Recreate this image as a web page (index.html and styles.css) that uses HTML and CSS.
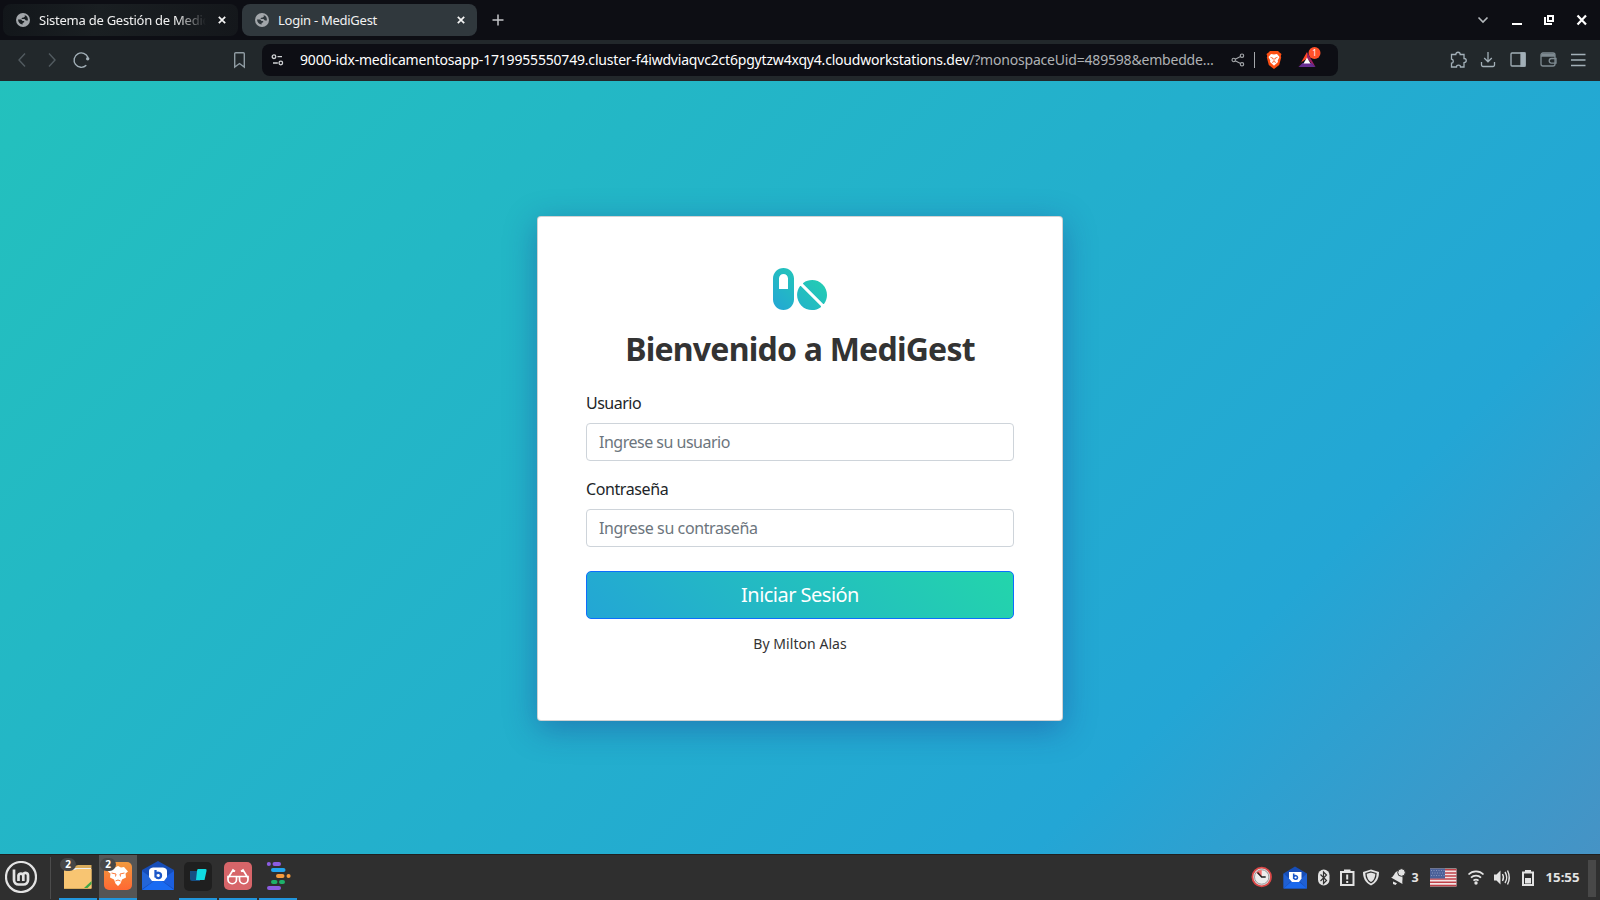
FILE: index.html
```html
<!DOCTYPE html>
<html lang="es">
<head>
<meta charset="utf-8">
<title>Login - MediGest</title>
<link rel="stylesheet" href="styles.css">
</head>
<body>
<div class="screen">
  <header class="tabbar">
    <div class="tab">
      <svg class="globe" viewBox="0 0 14 14"><circle cx="7" cy="7" r="7"/><path d="M2 6.500h3.200l1.300 1.400h1.700v1.300l-1.600.8v1.500c-2.600 0-4.400-2.200-4.600-5zM7.800 2h1.100v1.400l-1.200 1.100-1.500.2-.8 1.200h3.100l1.400 1.500h1.900c.5-2.700-1.200-5.200-4-5.400z"/></svg>
      <span class="tab-title faded t1">Sistema de Gestión de Medic</span>
      <svg class="x" viewBox="0 0 8 8"><path d="M.8.8l6.400 6.400M7.200.8L.8 7.200"/></svg>
    </div>
    <div class="tab active">
      <svg class="globe" viewBox="0 0 14 14"><circle cx="7" cy="7" r="7"/><path d="M2 6.500h3.200l1.300 1.400h1.700v1.300l-1.600.8v1.500c-2.600 0-4.400-2.200-4.600-5zM7.800 2h1.100v1.400l-1.200 1.100-1.500.2-.8 1.200h3.100l1.400 1.500h1.900c.5-2.700-1.200-5.200-4-5.400z"/></svg>
      <span class="tab-title t2">Login - MediGest</span>
      <svg class="x" viewBox="0 0 8 8"><path d="M.8.8l6.400 6.400M7.200.8L.8 7.200"/></svg>
    </div>
    <svg class="plus" viewBox="0 0 12 12"><path d="M6 .5v11M.5 6h11"/></svg>
    <svg class="winctl" viewBox="0 0 112 14"><path d="M1.500 4.500l4.500 4.500 4.500-4.500" fill="none" stroke="#b4b9bd" stroke-width="1.600"/><path d="M35 10h10v2H35z" fill="#fff"/><path d="M67 4v8h8v-2h-6V4zM70 2h7v7h-7zM72 4v3h3V4z" fill="#fff" fill-rule="evenodd"/><path d="M100.500 2.500l8.500 9M109 2.500l-8.500 9" stroke="#fff" stroke-width="2.200"/></svg>
  </header>

  <nav class="toolbar">
    <svg class="navicons" viewBox="0 0 74 18"><path d="M8 2.500L2 9l6 6.500M32 2.500L38 9l-6 6.500" class="dim"/><path d="M71 6.500A7.200 7.200 0 1 0 69.300 14.300" class="lit"/><circle cx="70.700" cy="7.800" r="1.700" fill="#a3b0b8"/></svg>
    <svg class="bookmark" viewBox="0 0 14 18"><path d="M1.700 2.700a1 1 0 0 1 1-1h7.600a1 1 0 0 1 1 1V16L6.500 12.500 1.700 16z"/></svg>
    <div class="address">
      <svg class="tune" viewBox="0 0 14 12"><circle cx="3" cy="2.700" r="1.800"/><path d="M6.500 2.700H11M2 9h4.800"/><circle cx="9.800" cy="9" r="1.800"/></svg>
      <span class="url">9000-idx-medicamentosapp-1719955550749.cluster-f4iwdviaqvc2ct6pgytzw4xqy4.cloudworkstations.dev<i>/?monospaceUid=489598&amp;embedde…</i></span>
      <svg class="share" viewBox="0 0 14 14"><circle cx="2.700" cy="7" r="1.700"/><circle cx="11" cy="2.700" r="1.700"/><circle cx="11" cy="11.300" r="1.700"/><path d="M4.200 6.200l5.300-2.700M4.200 7.800l5.300 2.700"/></svg>
      <span class="sep"></span>
      <svg class="shield" viewBox="0 0 16 18"><path d="M4 0h8l1.500 1.500L15.500 3l-.7 2 .4 1.500-2 7.500L8 18l-5.200-4L.8 6.500 1.200 5 .5 3l2-1.500z" fill="#fb4f14"/><path d="M5 3l3 .6L11 3l2.500 3-1.800 3.500.3 1.500L8 14.700 4 11l.3-1.500L2.500 6z" fill="#fff"/><path d="M4.500 6.300l2.300.8-.5 1.200M11.500 6.300l-2.300.8.5 1.200M8 7v3.500M6 11.500l2-1 2 1" stroke="#fb4f14" stroke-width=".8" fill="none"/></svg>
      <svg class="bat" viewBox="0 0 24 22"><path d="M9 5v6.500L3.500 15 .5 20z" fill="#ff4724"/><path d="M9 5l8.500 15-4-3.500L9 11z" fill="#9e1f63"/><path d="M.5 20h17l-4-4h-9z" fill="#662d91"/><path d="M9 10.500l3.500 6h-7z" fill="#fff"/><circle cx="16.500" cy="6" r="6" fill="#ff5029"/><text x="16.500" y="8.800" font-size="8" fill="#fff" text-anchor="middle">1</text></svg>
    </div>
    <svg class="tools" viewBox="0 0 138 18"><path d="M3 3.500h2.800c0-3 4.400-3 4.400 0H14v4c3 0 3 4.200 0 4.200V16h-3.500c0-2.400-4-2.400-4 0H1.500v-3.800c2.400-.2 2.400-3.800 0-4V3.500z"/><path d="M38 1v9.500M34.200 7L38 10.800 41.800 7M31.500 11v3a1.500 1.500 0 0 0 1.500 1.500h10a1.500 1.500 0 0 0 1.500-1.500v-3"/><rect x="61" y="2" width="14" height="13" rx="1"/><path d="M71 2h4v13h-4z" fill="#a3b0b8"/><g stroke="#7f8b92"><rect x="91" y="2" width="14" height="13" rx="2"/><path d="M91 5h14M106 7.500h-4.500a2.300 2.300 0 0 0 0 4.600h4.500zM91.500 3.500h13"/></g><path d="M121 3.500h14.500M121 9h14.500M121 14.500h14.500"/></svg>
  </nav>

  <main class="page">
    <section class="card">
      <svg class="pills" viewBox="0 0 576 512"><defs><linearGradient id="g" gradientUnits="userSpaceOnUse" x1="32" y1="512" x2="544" y2="0"><stop offset="0" stop-color="#23a6d5"/><stop offset="1" stop-color="#23d5ab"/></linearGradient></defs><path fill="url(#g)" d="M112 32C50.100 32 0 82.100 0 144v224c0 61.900 50.100 112 112 112s112-50.100 112-112V144C224 82.100 173.900 32 112 32zm48 224H64V144c0-26.500 21.500-48 48-48s48 21.500 48 48v112zm139.700-29.700c-3.500-3.500-9.400-3.100-12.300.8-45.300 62.500-40.400 150.100 15.900 206.400 56.300 56.300 143.900 61.200 206.400 15.900 4-2.900 4.300-8.800.8-12.300L299.700 226.300zm229.800-19c-56.300-56.300-143.900-61.200-206.400-15.900-4 2.900-4.300 8.800-.8 12.300l210.800 210.800c3.500 3.500 9.400 3.100 12.300-.8 45.300-62.600 40.500-150.100-15.900-206.400z"/></svg>
      <h1><span>Bienvenido a MediGest</span></h1>
      <form class="form">
        <label class="l-user" for="u">Usuario</label>
        <input class="p-user" id="u" type="text" placeholder="Ingrese su usuario">
        <label class="l-pass" for="p">Contraseña</label>
        <input class="p-pass" id="p" type="text" placeholder="Ingrese su contraseña">
        <button type="button">Iniciar Sesión</button>
      </form>
      <p class="by">By Milton Alas</p>
    </section>
  </main>

  <footer class="taskbar">
    <svg class="mint" viewBox="0 0 32 32"><circle cx="16" cy="16" r="15" fill="none" stroke="#e3e3e3" stroke-width="2.200"/><path d="M9 8.500V19a4.500 4.500 0 0 0 4.500 4.500h5A4.500 4.500 0 0 0 23 19v-4.500a2.500 2.500 0 0 0-4.600-1.400M13.500 20v-5.500a2.500 2.500 0 0 1 4.800 0V20" fill="none" stroke="#e3e3e3" stroke-width="2.700"/></svg>
    <span class="tsep"></span>
    <div class="app run"><svg viewBox="0 0 38 38"><path d="M5 11h11l3-1h13.500v24H5z" fill="#d9ac5c"/><path d="M12 13h20v5H12z" fill="#eee"/><path d="M5 15h10l3-1h14.500v19H5z" fill="#f8c572"/><path d="M25 33l7.500-7v3l-4 4z" fill="#3fa648"/></svg><b class="count">2</b></div>
    <div class="app run current"><svg viewBox="0 0 38 38"><defs><linearGradient id="br" x2="0" y2="1"><stop stop-color="#f29a3e"/><stop offset="1" stop-color="#ff6833"/></linearGradient></defs><rect x="5" y="7" width="28" height="28" rx="5" fill="url(#br)"/><path d="M13 12l3 .5L19 11l3 1.500 3-.5 4 4.500-2.500 2 .5 4-4 2-1.500 4L19 31l-2.500-2.500-1.500-4-4-2 .5-4-2.500-2z" fill="#fff"/><path d="M12.500 18l4.500 1-.5 2.500M25.500 18L21 19l.5 2.500M16.500 26l2.500-1 2.500 1" stroke="#fb793b" stroke-width="1" fill="none"/></svg><b class="count">2</b></div>
    <div class="app"><svg viewBox="0 0 38 38"><path d="M3 15L19 6l16 9v20H3z" fill="#164db8"/><path d="M3 16l13 9L3 34z" fill="#2365d8"/><path d="M35 16l-13 9 13 9z" fill="#1c5fdf"/><path d="M3 35l16-12 16 12z" fill="#1a6bf2"/><path d="M10 16q0-3 4-3.500h10q4 .5 4 3.500v6l-3 4H13l-3-4z" fill="#fff"/><path d="M16.500 15v7.500M17 19c1-2 5-1.500 5 1.500s-4 3.500-5 1.300" fill="none" stroke="#1b57c8" stroke-width="2.300"/></svg></div>
    <div class="app run"><svg viewBox="0 0 38 38"><rect x="5" y="7" width="28" height="29" rx="5" fill="#1f1f1f"/><path d="M11 16h10v10H13q-2 0-2-2z" fill="#164f83"/><path d="M19 14h7.500q1.500 0 1 2l-2 9H17l1-9q.2-2 1-2z" fill="#10dce2"/></svg></div>
    <div class="app run"><svg viewBox="0 0 38 38"><rect x="5" y="7" width="28" height="28" rx="5" fill="#d76569"/><path d="M9 23l5-8 2 1.500M29 23l-5-8-2 1.500M9 21.500h8.500v3a4.200 4.200 0 0 1-8.500 0zM20.500 21.500H29v3a4.200 4.200 0 0 1-8.500 0zM17.500 22q1.500-1 3 0" fill="none" stroke="#fff" stroke-width="1.700"/></svg></div>
    <div class="app run"><svg viewBox="0 0 38 38" stroke-width="4" stroke-linecap="round"><path d="M9.800 9h.1M15.500 9h4.500M10 33h10" stroke="#8c5de2"/><path d="M14 15h10.500" stroke="#22a6ee"/><path d="M19 21h4.500M29.500 21h.1" stroke="#f69b3d"/><path d="M14 27h2.500M22 27h2" stroke="#1eb16b"/></svg></div>
    <svg class="tray" viewBox="0 0 360 46">
      <circle cx="21.700" cy="22" r="9.300" fill="#ddd" stroke="#dc4747" stroke-width="1.800"/><circle cx="21.700" cy="22" r="7.200" fill="#eee" stroke="#999"/><path d="M21.700 22V15A7 7 0 0 0 16 17.500z" fill="#f46e6e"/><path d="M17.500 17.500l4.200 4.500h4" fill="none" stroke="#222" stroke-width="1.500"/>
      <path d="M43.500 18.500L55 11.500l12 7v15H43.500z" fill="#174eb8"/><path d="M43.500 33.500L55 23.500l12 10z" fill="#1b69ed"/><path d="M43.500 18.500v15l8-8zM67 18.500v15l-8-8z" fill="#2060d2"/><path d="M49 17h12.500v6.500L59 27h-7l-3-3.500z" fill="#fff"/><path d="M53.700 18.500V24M54 21.500c1-1.500 3.500-1 3.500 1s-2.500 2.200-3.500 1" fill="none" stroke="#1b57c8" stroke-width="1.600"/>
      <rect x="78" y="14.500" width="11.500" height="16" rx="5.700" fill="#e3e3e3"/><path d="M80.500 19.500l6 6-3 3V17l3 3-6 6" fill="none" stroke="#303030" stroke-width="1.200"/>
      <path d="M101 17h12.500v13H101z" fill="none" stroke="#e3e3e3" stroke-width="2"/><path d="M104 14.500h6.500v3H104zM106.200 19.500h2v5h-2zM106.200 26h2v2h-2z" fill="#e3e3e3"/>
      <path d="M131 14.500l8 2.500c0 6-2 10.500-8 13.500-6-3-8-7.500-8-13.500z" fill="#e3e3e3"/><path d="M131 17l5 1.500c0 4.500-1.500 7.300-5 9.300-3.500-2-5-4.800-5-9.300z" fill="none" stroke="#303030" stroke-width="1.300"/>
      <path d="M151 22.500c3-.5 3-5 6.500-6.500 2-.8 4 .5 4.500 2l.5 5c.2 2-.5 3.500 0 6zM153 26.500l4 1.800-1.500 1.700-2.500-1z" fill="#e3e3e3"/><circle cx="161.500" cy="17.500" r="3.800" fill="#e3e3e3" stroke="#303030"/>
      <text x="171.500" y="27" font-size="12.500" font-weight="bold" textLength="7" fill="#e3e3e3">3</text>
      <path d="M190 13.500h26.500v18H190z" fill="#f3e4e4"/><path d="M190 14.800h26.500M190 18h26.500M190 21h26.500M190 24.100h26.500M190 27.200h26.500M190 30.500h26.500" stroke="#c04048" stroke-width="1.500"/><path d="M190 13.500h15v10h-15z" fill="#4c6199"/><path d="M191 15.500h14M192 18h13M191 20.500h14" stroke="#95a3c7" stroke-width=".8" stroke-dasharray="1 1.500"/>
      <path d="M228.500 19.500a10.500 10.500 0 0 1 15 0M231 22.700a7 7 0 0 1 10 0M233.500 25.600a3.500 3.500 0 0 1 5 0" fill="none" stroke="#e3e3e3" stroke-width="1.700"/><circle cx="236" cy="28" r="1.700" fill="#e3e3e3"/>
      <path d="M254 19.500h2.500l4-4v14l-4-4H254z" fill="#e3e3e3"/><path d="M262.500 19q2 3.500 0 7M265 17q3.500 5.500 0 11M267.500 15.500q3.500 7 0 14" fill="none" stroke="#e3e3e3" stroke-width="1.400"/>
      <path d="M283 17.500h10V30h-10z" fill="none" stroke="#e3e3e3" stroke-width="2"/><path d="M285 15h6v2.500h-6zM285 23h6v5.500h-6z" fill="#e3e3e3"/>
      <text x="305.500" y="27" font-size="12.500" font-weight="bold" textLength="34" lengthAdjust="spacingAndGlyphs" fill="#e3e3e3">15:55</text>
      <path d="M348 5h8v37h-8z" fill="#484848"/>
    </svg>
  </footer>
</div>
</body>
</html>
```
FILE: styles.css
```css
*{box-sizing:border-box}
body{margin:0;font-family:"Noto Sans","Open Sans",sans-serif;color:#212529}
svg{display:block;flex:none}
.screen{width:1600px;height:900px;display:flex;flex-direction:column;overflow:hidden}
.tabbar{height:40px;background:#0d0e14;display:flex;align-items:center;padding-left:3px}
.tab{width:235px;height:32px;border-radius:8px;background:linear-gradient(100deg,#12161a,#1a1f22 40%,#14171b);display:flex;align-items:center;padding:0 12px 0 13px;margin-right:4px}
.tab.active{background:#30383d}
.globe{width:14px;height:14px;margin-right:9px}
.globe circle{fill:#a2a6aa}
.globe path{fill:#1a1f22}
.active .globe path{fill:#30383d}
.tab-title{flex:1;min-width:0;font-size:13px;line-height:20px;color:#f1f1f1;white-space:nowrap}
.t1{letter-spacing:-.24px}
.t2{letter-spacing:-.26px}
.faded{-webkit-mask-image:linear-gradient(90deg,#000 82%,transparent);mask-image:linear-gradient(90deg,#000 82%,transparent)}
.x{width:8px;height:8px;stroke:#f4f4f4;stroke-width:1.7;margin-left:12px}
.plus{width:12px;height:12px;stroke:#c3c5c8;stroke-width:1.5;margin-left:11px}
.winctl{width:112px;height:14px;margin-left:auto;margin-right:11px}
.toolbar{height:41px;background:#22282b;display:flex;align-items:center;padding:0 0 1px 17px}
.navicons{width:74px;height:18px;fill:none;stroke-width:1.4}
.dim{stroke:#525b60}
.lit{stroke:#a3b0b8}
.bookmark{width:14px;height:18px;fill:none;stroke:#8f9ba2;stroke-width:1.4;margin:0 0 0 142px}
.address{width:1076px;height:32px;border-radius:8px;background:#0d0e14;margin-left:15px;display:flex;align-items:center;padding-left:9px}
.tune{width:14px;height:12px;fill:none;stroke:#d0d2d4;stroke-width:1.3}
.url{width:914px;margin-left:15px;font-size:14px;line-height:20px;letter-spacing:-.19px;color:#fff;white-space:nowrap}
.url i{font-style:normal;color:#afb2b4}
.share{width:14px;height:14px;fill:none;stroke:#a4a7aa;stroke-width:1.1;margin-left:17px}
.sep{width:1px;height:16px;background:#a4a7aa;margin-left:9px}
.shield{width:16px;height:18px;margin-left:11px}
.bat{width:24px;height:22px;margin:-5px 0 0 16px}
.tools{width:138px;height:18px;margin-left:112px;fill:none;stroke:#a3b0b8;stroke-width:1.3}
.page{height:773px;background:linear-gradient(135deg,#23c1bd,#23a6d5 75.9%,#4693c5);display:flex;justify-content:center;align-items:flex-start;padding-top:135px}
.card{width:526px;height:505px;background:#fff;border:1px solid rgba(0,0,0,.176);border-radius:4px;padding:48px;box-shadow:0 8px 32px rgba(31,38,135,.37);display:flex;flex-direction:column}
.pills{width:54px;height:48px;align-self:center}
h1{margin:12px 0 0;font-size:32px;line-height:48px;color:#333;text-align:center;white-space:nowrap;letter-spacing:-.77px}
.form{display:flex;flex-direction:column}
label{font-size:16px;line-height:24px;margin-top:18px;letter-spacing:-.5px}
input{height:38px;margin-top:8px;border:1px solid #ced4da;border-radius:4px;padding:0 12px;font:16px "Noto Sans",sans-serif;letter-spacing:-.5px}
input::placeholder{color:#6c757d;opacity:1}
.l-pass{margin-top:16px;letter-spacing:-.4px}
.p-pass{letter-spacing:-.4px}
button{height:48px;margin-top:24px;border:1px solid #0d6efd;border-radius:5px;background:linear-gradient(45deg,#23a6d5,#23d5ab);color:#fff;font:20px "Noto Sans",sans-serif;letter-spacing:-.52px;padding:0 0 2px}
.by{margin:14px 0 0;font-size:14px;line-height:21px;text-align:center;color:#333;letter-spacing:.05px}
.taskbar{height:46px;background:#2f2f2f;border-top:1px solid #202020;display:flex;align-items:center;padding-left:5px}
.mint{width:32px;height:32px;margin-bottom:2px}
.tsep{width:1px;height:42px;background:#4c4c4c;margin:0 8px 0 13px}
.app{width:38px;height:45px;margin-right:2px;position:relative;border-bottom:2px solid transparent}
.app svg{width:38px;height:38px}
.run{border-bottom-color:#2196dc}
.current{background:#555}
.count{position:absolute;left:1px;top:3px;width:16px;height:13px;border-radius:7px;background:#474747;color:#fff;font-size:10px;line-height:13px;text-align:center}
.tray{width:360px;height:46px;margin-left:auto}
```
